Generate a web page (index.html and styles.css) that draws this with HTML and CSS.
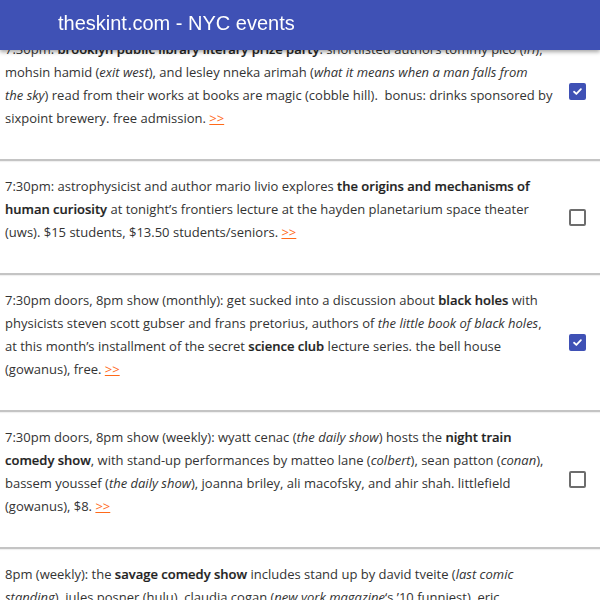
FILE: index.html
```html
<!DOCTYPE html>
<html>
<head>
<meta charset="utf-8">
<link rel="stylesheet" href="styles.css">
</head>
<body>
<header class="appbar"><h1 class="title">theskint.com - NYC events</h1></header>
<main class="list">
  <div class="item">
    <p class="text">7:30pm: <b>brooklyn public library literary prize party</b>: shortlisted authors tommy pico (<i>irl</i>),<br>mohsin hamid (<i>exit west</i>), and lesley nneka arimah (<i>what it means when a man falls from</i><br><i>the sky</i>) read from their works at books are magic (cobble hill).&nbsp; bonus: drinks sponsored by<br>sixpoint brewery. free admission. <a class="more" href="#">&gt;&gt;</a></p>
    <div class="check-col"><span class="box checked"><svg viewBox="0 0 16 16" width="16" height="16"><path d="M3.8 8.3 L6.6 11 L12.2 5.2" fill="none" stroke="#fff" stroke-width="2.2" stroke-linecap="round" stroke-linejoin="round"/></svg></span></div>
  </div>
  <div class="item">
    <p class="text">7:30pm: astrophysicist and author mario livio explores <b>the origins and mechanisms of</b><br><b>human curiosity</b> at tonight’s frontiers lecture at the hayden planetarium space theater<br>(uws). $15 students, $13.50 students/seniors. <a class="more" href="#">&gt;&gt;</a></p>
    <div class="check-col"><span class="box"></span></div>
  </div>
  <div class="item">
    <p class="text">7:30pm doors, 8pm show (monthly): get sucked into a discussion about <b>black holes</b> with<br>physicists steven scott gubser and frans pretorius, authors of <i>the little book of black holes</i>,<br>at this month’s installment of the secret <b>science club</b> lecture series. the bell house<br>(gowanus), free. <a class="more" href="#">&gt;&gt;</a></p>
    <div class="check-col"><span class="box checked"><svg viewBox="0 0 16 16" width="16" height="16"><path d="M3.8 8.3 L6.6 11 L12.2 5.2" fill="none" stroke="#fff" stroke-width="2.2" stroke-linecap="round" stroke-linejoin="round"/></svg></span></div>
  </div>
  <div class="item">
    <p class="text">7:30pm doors, 8pm show (weekly): wyatt cenac (<i>the daily show</i>) hosts the <b>night train</b><br><b>comedy show</b>, with stand-up performances by matteo lane (<i>colbert</i>), sean patton (<i>conan</i>),<br>bassem youssef (<i>the daily show</i>), joanna briley, ali macofsky, and ahir shah. littlefield<br>(gowanus), $8. <a class="more" href="#">&gt;&gt;</a></p>
    <div class="check-col"><span class="box"></span></div>
  </div>
  <div class="item">
    <p class="text">8pm (weekly): the <b>savage comedy show</b> includes stand up by david tveite (<i>last comic</i><br><i>standing</i>), jules posner (hulu), claudia cogan (<i>new york magazine</i>‘s ’10 funniest), eric<br>vetter, and host jordan savage. the gutter (williamsburg), free, with a drink<br>minimum. <a class="more" href="#">&gt;&gt;</a></p>
    <div class="check-col"><span class="box"></span></div>
  </div>
</main>
</body>
</html>
```
FILE: styles.css
```css
html, body {
  margin: 0;
  padding: 0;
  background: #fff;
}
body {
  font-family: "Open Sans", "DejaVu Sans", sans-serif;
  color: #333;
  overflow: hidden;
  height: 600px;
}
.appbar {
  position: fixed;
  top: 0;
  left: 0;
  right: 0;
  height: 50px;
  background: #3f51b5;
  box-shadow: 0 2px 4px rgba(0,0,0,0.35);
  z-index: 10;
  display: flex;
  align-items: center;
  padding-left: 58px;
}
.title {
  margin: 0;
  font-family: "Liberation Sans", Arial, sans-serif;
  font-weight: normal;
  font-size: 20px;
  color: #fff;
  padding-bottom: 3px;
}
.list {
  padding-top: 24px;
}
.item {
  display: flex;
  align-items: center;
  border-bottom: 2px solid #c4c4c4;
  box-shadow: 0 1px 1px rgba(0,0,0,0.06);
}
.text {
  flex: 1 1 auto;
  min-width: 0;
  margin: 0;
  padding: 14px 0 29px 5px;
  font-size: 13px;
  line-height: 23px;
  white-space: nowrap;
}
.text b { font-weight: 600; color: #1f1f1f; -webkit-text-stroke: 0.2px #1f1f1f; }
.more {
  color: #ff6a1a;
  text-decoration: underline;
}
.check-col {
  flex: 0 0 46px;
  display: flex;
  justify-content: center;
}
.box {
  width: 13px;
  height: 13px;
  border: 2px solid #6d6d6d;
  border-radius: 2px;
  display: flex;
  align-items: center;
  justify-content: center;
}
.box.checked {
  background: #3f51b5;
  border-color: #3f51b5;
}
.box svg {
  width: 13px;
  height: 13px;
}
```
